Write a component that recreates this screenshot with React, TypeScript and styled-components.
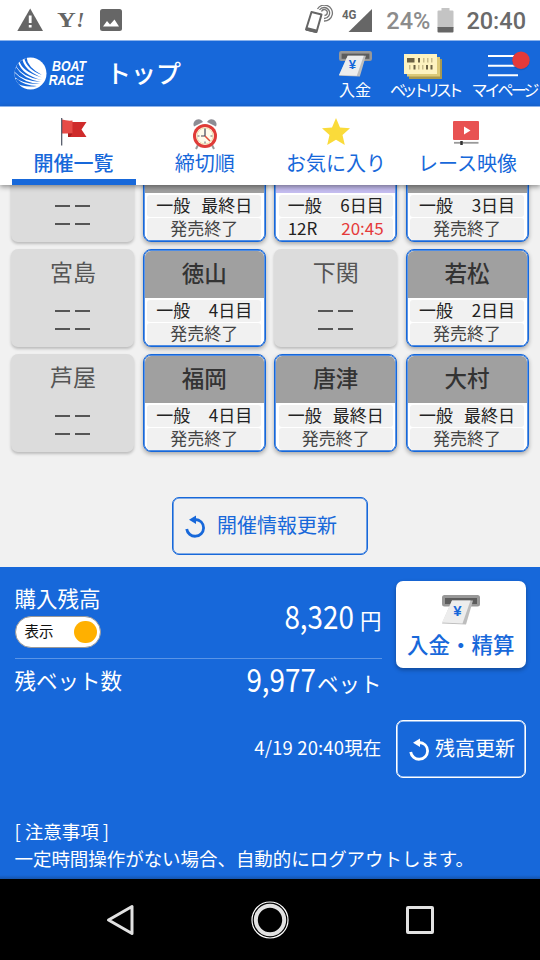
import React from 'react';
import styled, { createGlobalStyle } from 'styled-components';

const BLUE = '#1768da';

const GlobalStyle = createGlobalStyle`
  * {
    box-sizing: border-box;
  }
  body {
    margin: 0;
    background: #f1f1f1;
    font-family: 'Noto Sans CJK JP', 'Noto Sans', sans-serif;
  }
  svg {
    display: block;
    flex: none;
  }
  button {
    font-family: inherit;
    cursor: pointer;
  }
`;

const Screen = styled.div`
  width: 540px;
  height: 960px;
  display: flex;
  flex-direction: column;
  overflow: hidden;
`;

const StatusBar = styled.div`
  height: 41px;
  flex: none;
  display: flex;
  align-items: center;
  justify-content: space-between;
  padding: 0 14px 0 17px;
  background: #fff;
  border-bottom: 1px solid #8bb3ec;
  font-family: Roboto, sans-serif;
`;

const StatusGroup = styled.div`
  display: flex;
  align-items: center;
`;

const StatusText = styled.span<{ $color: string; $left: number }>`
  color: ${({ $color }) => $color};
  margin-left: ${({ $left }) => $left}px;
  font-size: 23.5px;
  line-height: 38px;
  padding-top: 2px;
  font-weight: 500;
`;

const CarrierMark = styled.div`
  display: flex;
  align-items: baseline;
  width: 27px;
  margin-left: 13px;
  color: #666;
  font: bold 20px/28px 'Liberation Serif', serif;
  span {
    transform: scaleX(1.3);
    transform-origin: left center;
    margin-right: 5px;
  }
`;

const AppHeader = styled.header`
  height: 65px;
  flex: none;
  display: flex;
  align-items: center;
  padding-left: 14px;
  background: ${BLUE};
  color: #fff;
`;

const LogoText = styled.div`
  width: 50px;
  margin: 0 0 2px 5px;
  font: italic bold 15px/13.5px 'Liberation Sans', sans-serif;
  transform: scaleX(0.82);
  transform-origin: left center;
  div + div {
    margin-left: -4px;
  }
`;

const PageTitle = styled.h1`
  margin: 0 0 4px 4px;
  font-size: 25px;
  font-weight: 500;
  line-height: 30px;
`;

const HeaderMenu = styled.nav`
  display: flex;
  gap: 9px;
  margin-left: auto;
  height: 100%;
`;

const MenuItem = styled.div<{ $width: number; $tight?: number }>`
  width: ${({ $width }) => $width}px;
  display: flex;
  flex-direction: column;
  align-items: center;
  justify-content: space-between;
  padding: 10px 0 7px;
  font-size: 16px;
  line-height: 20px;
  white-space: nowrap;
  letter-spacing: ${({ $tight = 0 }) => -$tight}px;
`;

const Tabs = styled.nav`
  position: relative;
  z-index: 1;
  height: 79px;
  flex: none;
  display: grid;
  grid-template-columns: repeat(4, 124px);
  column-gap: 7.3px;
  padding: 0 11.5px;
  background: #fff;
  border-top: 1px solid #8bb3ec;
  box-shadow: 0 2px 5px rgba(0, 0, 0, 0.4);
`;

const Tab = styled.div<{ $active?: boolean }>`
  display: flex;
  flex-direction: column;
  align-items: center;
  padding-top: 8px;
  border-bottom: 6px solid ${({ $active }) => ($active ? BLUE : 'transparent')};
  color: ${BLUE};
  font-size: 20px;
  line-height: 29px;
  font-weight: ${({ $active }) => ($active ? 500 : 400)};
`;

const TabIcon = styled.div`
  height: 33px;
  display: flex;
  align-items: center;
`;

const Content = styled.main`
  height: 382px;
  flex: none;
  overflow: hidden;
  background: #f1f1f1;
`;

const VenueGrid = styled.div`
  display: grid;
  grid-template-columns: repeat(4, 123px);
  grid-auto-rows: 98px;
  gap: 7px 8.4px;
  margin-top: -41px;
  padding-left: 11.4px;
`;

const ClosedCard = styled.div`
  display: flex;
  flex-direction: column;
  align-items: center;
  border-radius: 7px;
  background: #dcdcdc;
  box-shadow: 0 2px 3px rgba(0, 0, 0, 0.22);
  color: #555;
  font-size: 23px;
  line-height: 30px;
  padding-top: 7px;
`;

const Dashes = styled.div`
  display: grid;
  grid-template-columns: 15px 15px;
  gap: 16px 5px;
  margin-top: 24px;
  i {
    height: 2px;
    background: #555;
  }
`;

const OpenCard = styled.div`
  display: flex;
  flex-direction: column;
  overflow: hidden;
  border: 1px solid ${BLUE};
  border-radius: 8px;
  background: #fff;
  box-shadow: inset 0 0 0 0.7px ${BLUE}, 0 2px 4px rgba(0, 0, 0, 0.3);
`;

const VenueName = styled.div<{ $live?: boolean }>`
  height: 47px;
  margin: 1px 1px 2px;
  border-radius: 6px 6px 0 0;
  background: ${({ $live }) => ($live ? '#c5bdf0' : '#a0a0a0')};
  color: #333;
  font-size: 22.5px;
  font-weight: 500;
  line-height: 43px;
  text-align: center;
`;

const InfoRow = styled.div<{ $center?: boolean }>`
  display: flex;
  justify-content: ${({ $center }) => ($center ? 'center' : 'space-between')};
  height: 21.5px;
  margin: 0 3.5px 1.5px;
  padding: 0 9px;
  border-radius: 3px;
  background: #f1f1f1;
  color: ${({ $center }) => ($center ? '#444' : '#222')};
  font-size: 17px;
  line-height: 20px;
  white-space: nowrap;
`;

const Deadline = styled.span`
  color: #e53a3a;
`;

const OutlineButton = styled.button<{ $color: string; $width: number; $gap: number }>`
  width: ${({ $width }) => $width}px;
  height: 58px;
  display: flex;
  align-items: center;
  gap: ${({ $gap }) => $gap}px;
  padding: 0 0 0 12px;
  border: 1px solid ${({ $color }) => $color};
  border-radius: 7px;
  box-shadow: inset 0 0 0 0.6px ${({ $color }) => $color};
  background: transparent;
  color: ${({ $color }) => $color};
  font-size: 20px;
  line-height: 28px;
  white-space: nowrap;
  svg {
    margin-top: 2px;
  }
  span {
    margin-top: -2px;
  }
`;

const RefreshArea = styled.div`
  display: flex;
  justify-content: center;
  margin-top: 45px;
`;

const Account = styled.section`
  height: 312px;
  flex: none;
  padding: 14px 14.5px 0;
  background: linear-gradient(${BLUE} 308px, #1554ad);
  color: #fff;
`;

const AccountGrid = styled.div`
  display: grid;
  grid-template-columns: 367px 129.5px;
  column-gap: 14.5px;
  grid-template-rows: 78px 45px 16px 58px;
`;

const BalanceRow = styled.div`
  display: flex;
  justify-content: space-between;
  align-items: flex-start;
  border-bottom: 1px solid #5a94e6;
`;

const BetRow = styled.div`
  display: flex;
  justify-content: space-between;
  align-items: flex-start;
`;

const Label = styled.div<{ $top?: number }>`
  margin-top: ${({ $top = 0 }) => $top}px;
  font-size: 21.5px;
  line-height: 34px;
`;

const Toggle = styled.div`
  width: 86px;
  height: 32px;
  display: flex;
  align-items: center;
  justify-content: space-between;
  margin-top: 1px;
  padding: 0 3px 0 9px;
  border: 1.5px solid #999;
  border-radius: 16px;
  background: #fff;
  color: #111;
  font-size: 14.5px;
  line-height: 26px;
  b {
    font-weight: 400;
    margin-top: -3px;
  }
`;

const Knob = styled.span`
  width: 22.5px;
  height: 22.5px;
  border-radius: 50%;
  background: #ffb000;
`;

const Amount = styled.div<{ $top: number }>`
  display: flex;
  align-items: baseline;
  margin-top: ${({ $top }) => $top}px;
  font-size: 21.5px;
  line-height: 40px;
`;

const Figure = styled.span<{ $gap: number }>`
  font-size: 32px;
  transform: scaleX(0.87);
  transform-origin: right center;
  margin-right: ${({ $gap }) => $gap}px;
`;

const DepositButton = styled.button`
  grid-column: 2;
  grid-row: 1 / span 2;
  height: 86.5px;
  display: flex;
  flex-direction: column;
  align-items: center;
  padding: 14px 0 0;
  border: 0;
  border-radius: 7px;
  background: #fff;
  box-shadow: 0 2px 4px rgba(0, 0, 0, 0.3);
  color: ${BLUE};
  font-size: 21.5px;
  font-weight: 500;
  line-height: 38px;
`;

const UpdatedAt = styled.div`
  grid-row: 4;
  align-self: center;
  text-align: right;
  font-size: 18.5px;
  letter-spacing: 0.15px;
  margin-top: -4px;
`;

const ReloadCell = styled.div`
  grid-row: 4;
`;

const Notice = styled.p`
  margin: 40px 0 0;
  font-size: 18.5px;
  line-height: 27px;
  letter-spacing: -0.05px;
  white-space: nowrap;
`;

const NavBar = styled.footer`
  flex: 1;
  display: flex;
  align-items: center;
  justify-content: space-between;
  padding: 0 105px;
  background: #000;
`;

const LogoMark = () => (
  <svg width="33" height="33" viewBox="0 0 33 33">
    <clipPath id="ball">
      <circle cx="16.5" cy="16.5" r="16" />
    </clipPath>
    <circle cx="16.5" cy="16.5" r="16" fill="#fff" />
    <g clipPath="url(#ball)" fill={BLUE}>
      <path d="M10 0L12.500 0Q13 10 28 18Q12 12 10 0z" />
      <path d="M5 0L8 0Q9 13 28 20.500Q8 15 5 3z" />
      <path d="M1 5L4 5Q8 18 28 23Q7 20 1 7z" />
      <path d="M-1 10L2 10Q9 22 27 25Q7 24 -1 13z" />
      <path d="M-1 16L1 16Q10 26 26 27Q9 28 -1 19z" />
      <path d="M0 22L3 22Q11 29 23 29Q10 31 0 25z" />
    </g>
  </svg>
);

const DepositIcon = ({ width }: { width: number }) => (
  <svg width={width} height={(width * 30) / 38} viewBox="0 0 38 30">
    <rect width="38" height="11.5" rx="2.5" fill="#989898" />
    <rect x="3" y="3" width="32" height="6" fill="#5c5c5c" />
    <path d="M10 5.500H31L24 29.500L0 28.500z" fill="#bdbdbd" />
    <path d="M10 5.500H28.500L20.500 28.500L0 27.500z" fill="#ededed" />
    <text x="15.5" y="21" textAnchor="middle" fontFamily="Liberation Sans" fontWeight="bold" fontSize="15" fill={BLUE}>
      ¥
    </text>
  </svg>
);

const BetListIcon = () => (
  <svg width="38" height="25" viewBox="0 0 38 25" style={{ marginLeft: -4, marginTop: 3 }}>
    <path d="M5 5h33v20H5z" fill="#a8994f" />
    <path d="M3 3h33v19.500H3z" fill="#dcca78" />
    <path d="M0 0h33v20H0z" fill="#fdf3c0" />
    <path d="M3 4h7.500v4.500H3zM14 4h2v4.500h-2zM9.500 11h2v4.500h-2zM22 11h2v4.500h-2zM26.500 11h2v4.500h-2z" fill="#6b6244" />
    <path d="M19 4h1.500v4.500H19zM23 4h1.500v4.500H23zM27 4h1.500v4.500H27zM5 11h1.500v4.500H5zM14 11h1.500v4.500H14zM18 11h1.500v4.500H18z" fill="#c9bd8c" />
  </svg>
);

const MenuIcon = () => (
  <svg width="44" height="28" viewBox="0 0 44 28" style={{ marginLeft: 9 }}>
    <path d="M1 5H31M1 14.800H31M1 24.300H31" stroke="#fff" strokeWidth="2" />
    <circle cx="34" cy="10.500" r="8.700" fill="#0f4fae" opacity="0.5" />
    <circle cx="34" cy="9.200" r="8.700" fill="#e53a3a" />
  </svg>
);

const FlagIcon = () => (
  <svg width="26" height="28" viewBox="0 0 26 28">
    <path d="M7 4H25.500L20.500 11.500L25.500 19H7z" fill="#cf2b2b" />
    <path d="M1 1.500Q6 3 11.500 2.500V15.500H1z" fill="#e64b47" />
    <path d="M7 15.500H11.500L9 19H7z" fill="#a81f1f" />
    <path d="M0.700 0V27.500" stroke="#4a5060" strokeWidth="1.200" />
  </svg>
);

const ClockIcon = () => (
  <svg width="26" height="31" viewBox="0 0 26 31" style={{ marginTop: 6 }}>
    <path d="M6 26L4 30M20 26L22 30" stroke="#999" strokeWidth="2" />
    <path d="M2 7.500A5 5 0 0 1 11 3z M24 7.500A5 5 0 0 0 15 3z" fill="#8d8d95" />
    <circle cx="13" cy="17" r="12" fill="#e03c38" />
    <circle cx="13" cy="17" r="9" fill="#fffbea" />
    <circle cx="13" cy="17" r="8" fill="none" stroke="#f1dfb0" />
    <path d="M13 9.500V17H9" fill="none" stroke="#445" strokeWidth="1.200" />
    <path d="M5.500 17h2M18.500 17h2M13 22.500v2" stroke="#667" />
    <path d="M13 17L18 22" stroke="#e0503c" strokeWidth="1.500" />
  </svg>
);

const StarIcon = () => (
  <svg width="28" height="27" viewBox="0 0 28 27" style={{ marginRight: 1 }}>
    <path d="M14 0L18 9.500L28 10.300L20.500 17L22.800 27L14 21.700L5.200 27L7.500 17L0 10.300L10 9.500z" fill="#fadb3a" />
  </svg>
);

const VideoIcon = () => (
  <svg width="26" height="25" viewBox="0 0 26 25" style={{ marginTop: 3, marginRight: 2 }}>
    <rect width="26" height="19" rx="1" fill="#e85252" />
    <path d="M11 5.500L17.500 9.500L11 13.500z" fill="#fff" />
    <path d="M1 21.800H25.500" stroke="#999" strokeWidth="1.800" />
    <path d="M8.500 20V24" stroke="#333" strokeWidth="2.500" />
  </svg>
);

const ReloadIcon = () => (
  <svg width="21" height="24" viewBox="0 0 21 24">
    <path d="M10 4.500C15 4.500 18.600 8 18.600 13A8.500 8.500 0 0 1 1.700 14" fill="none" stroke="currentColor" strokeWidth="2.800" />
    <path d="M11 0.500V9L4 4.800z" fill="currentColor" />
  </svg>
);

type Venue = {
  name: string;
  day?: string;
  race?: string;
  time?: string;
};

const venues: Venue[] = [
  { name: '' },
  { name: '', day: '最終日' },
  { name: '', day: '6日目', race: '12R', time: '20:45' },
  { name: '', day: '3日目' },
  { name: '宮島' },
  { name: '徳山', day: '4日目' },
  { name: '下関' },
  { name: '若松', day: '2日目' },
  { name: '芦屋' },
  { name: '福岡', day: '4日目' },
  { name: '唐津', day: '最終日' },
  { name: '大村', day: '最終日' },
];

const VenueCard = ({ name, day, race, time }: Venue) => {
  if (!day) {
    return (
      <ClosedCard>
        {name || '\u00a0'}
        <Dashes>
          <i />
          <i />
          <i />
          <i />
        </Dashes>
      </ClosedCard>
    );
  }
  return (
    <OpenCard>
      <VenueName $live={!!time}>{name}</VenueName>
      <InfoRow>
        <span>一般</span>
        <span>{day}</span>
      </InfoRow>
      {time ? (
        <InfoRow>
          <span>{race}</span>
          <Deadline>{time}</Deadline>
        </InfoRow>
      ) : (
        <InfoRow $center>発売終了</InfoRow>
      )}
    </OpenCard>
  );
};

const App = () => (
  <Screen>
    <GlobalStyle />
    <StatusBar>
      <StatusGroup>
        <svg width="27" height="24" viewBox="0 0 27 24">
          <path d="M13.200 0.500L26 23H0.300z" fill="#666" />
          <path d="M11.800 7.500h2.800v7.500h-2.800zM11.800 17h2.800v2.600h-2.800z" fill="#fff" />
        </svg>
        <CarrierMark>
          <span>Y</span>
          <em>!</em>
        </CarrierMark>
        <svg width="22" height="22" viewBox="0 0 22 22" style={{ marginLeft: 16 }}>
          <rect width="22" height="22" rx="2.500" fill="#666" />
          <path d="M3 17.500L7 12L10 15.500L14.500 10.500L19 17.500z" fill="#fff" />
        </svg>
      </StatusGroup>
      <StatusGroup>
        <svg width="30" height="30" viewBox="0 0 30 30">
          <path d="M7.500 7L17.500 9.500L12.500 27L2 24.500z" fill="none" stroke="#666" strokeWidth="2" strokeLinejoin="round" />
          <path d="M2.500 22L12.500 24.500L12 28L2 25.500z" fill="#666" />
          <path
            d="M17.500 6.500a3 3 0 1 1 3 4M15.500 5a5.500 5.500 0 1 1 4.500 8.500M13.500 4a8 8 0 1 1 6.500 12"
            fill="none"
            stroke="#777"
            strokeWidth="1.300"
          />
        </svg>
        <svg width="30" height="26" viewBox="0 0 30 26" style={{ marginLeft: 8 }}>
          <text x="0" y="12" fontFamily="Roboto" fontWeight="bold" fontSize="13" fill="#666" textLength="14.500" lengthAdjust="spacingAndGlyphs">
            4G
          </text>
          <path d="M30 2V25H6.500z" fill="#666" />
        </svg>
        <StatusText $color="#8c8c8c" $left={14}>
          24%
        </StatusText>
        <svg width="17" height="25" viewBox="0 0 17 25" style={{ marginLeft: 7 }}>
          <path d="M4.500 0h8v2.500H15.500a1 1 0 0 1 1 1V20H0.500V3.500a1 1 0 0 1 1-1h3z" fill="#c4c4c4" />
          <path d="M0.500 19h16v4.500a1 1 0 0 1-1 1h-14a1 1 0 0 1-1-1z" fill="#666" />
        </svg>
        <StatusText $color="#6a6a6a" $left={12}>
          20:40
        </StatusText>
      </StatusGroup>
    </StatusBar>
    <AppHeader>
      <LogoMark />
      <LogoText>
        <div>BOAT</div>
        <div>RACE</div>
      </LogoText>
      <PageTitle>トップ</PageTitle>
      <HeaderMenu>
        <MenuItem $width={52}>
          <DepositIcon width={33} />
          入金
        </MenuItem>
        <MenuItem $width={69} $tight={4.5}>
          <BetListIcon />
          ベットリスト
        </MenuItem>
        <MenuItem $width={72} $tight={2.9}>
          <MenuIcon />
          マイページ
        </MenuItem>
      </HeaderMenu>
    </AppHeader>
    <Tabs>
      <Tab $active>
        <TabIcon>
          <FlagIcon />
        </TabIcon>
        開催一覧
      </Tab>
      <Tab>
        <TabIcon>
          <ClockIcon />
        </TabIcon>
        締切順
      </Tab>
      <Tab>
        <TabIcon>
          <StarIcon />
        </TabIcon>
        お気に入り
      </Tab>
      <Tab>
        <TabIcon>
          <VideoIcon />
        </TabIcon>
        レース映像
      </Tab>
    </Tabs>
    <Content>
      <VenueGrid>
        {venues.map((venue, i) => (
          <VenueCard key={i} {...venue} />
        ))}
      </VenueGrid>
      <RefreshArea>
        <OutlineButton $color={BLUE} $width={196} $gap={11}>
          <ReloadIcon />
          <span>開催情報更新</span>
        </OutlineButton>
      </RefreshArea>
    </Content>
    <Account>
      <AccountGrid>
        <BalanceRow>
          <div>
            <Label>購入残高</Label>
            <Toggle>
              <b>表示</b>
              <Knob />
            </Toggle>
          </div>
          <Amount $top={14}>
            <Figure $gap={6}>8,320</Figure>円
          </Amount>
        </BalanceRow>
        <DepositButton>
          <DepositIcon width={38} />
          入金・精算
        </DepositButton>
        <BetRow>
          <Label $top={4}>残ベット数</Label>
          <Amount $top={-1}>
            <Figure $gap={1}>9,977</Figure>ベット
          </Amount>
        </BetRow>
        <UpdatedAt>4/19 20:40現在</UpdatedAt>
        <ReloadCell>
          <OutlineButton $color="#fff" $width={129.5} $gap={5}>
            <ReloadIcon />
            <span>残高更新</span>
          </OutlineButton>
        </ReloadCell>
      </AccountGrid>
      <Notice>
        [ 注意事項 ]
        <br />
        一定時間操作がない場合、自動的にログアウトします。
      </Notice>
    </Account>
    <NavBar>
      <svg width="30" height="34" viewBox="0 0 30 34">
        <path d="M27 3.500V30.500L3.500 17z" fill="none" stroke="#e2e2e2" strokeWidth="3" strokeLinejoin="round" />
      </svg>
      <svg width="38" height="38" viewBox="0 0 38 38">
        <circle cx="19" cy="19" r="18" fill="none" stroke="#fff" strokeWidth="1.200" />
        <circle cx="19" cy="19" r="14.200" fill="none" stroke="#e2e2e2" strokeWidth="4" />
      </svg>
      <svg width="30" height="30" viewBox="0 0 30 30">
        <rect x="2.500" y="2.500" width="25" height="25" rx="0.500" fill="none" stroke="#e2e2e2" strokeWidth="3" />
      </svg>
    </NavBar>
  </Screen>
);

export default App;
